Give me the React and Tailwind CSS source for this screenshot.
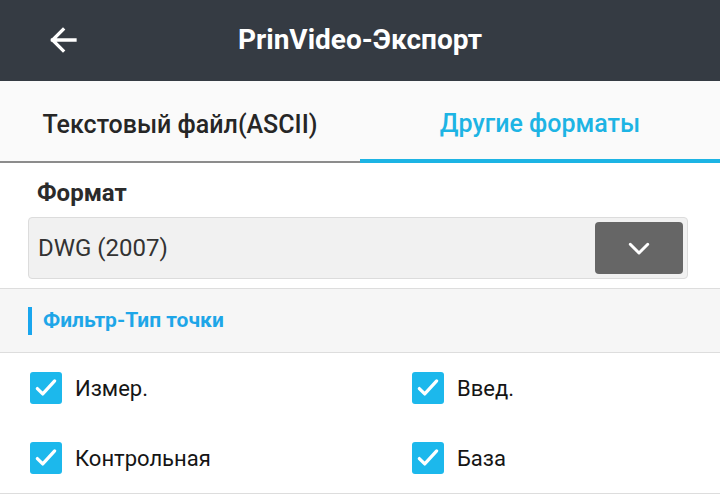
import { useState } from 'react';

function Check({ label, checked, onToggle }) {
  return (
    <button onClick={onToggle} className="flex items-center gap-[13px] h-[70px] text-left">
      <span className={`w-[32px] h-[32px] rounded-[3px] flex items-center justify-center ${checked ? 'bg-[#1cb8ec]' : 'border-2 border-gray-400'}`}>
        {checked && (
          <svg width="26" height="26" viewBox="0 0 24 24" fill="none" stroke="white" strokeWidth="3" strokeLinecap="round" strokeLinejoin="round">
            <path d="M4 12.5l5 5L20 5.5" />
          </svg>
        )}
      </span>
      <span className="text-[22px] text-[#151515]">{label}</span>
    </button>
  );
}

export default function App() {
  const [tab, setTab] = useState(1);
  const [checks, setChecks] = useState({ izm: true, vved: true, kontr: true, baza: true });
  const toggle = (k) => setChecks((p) => ({ ...p, [k]: !p[k] }));

  return (
    <div className="w-[720px] h-[498px] bg-white overflow-hidden" style={{ fontFamily: 'Roboto, "Noto Sans", sans-serif' }}>
      <div className="h-[81px] bg-[#353b43] flex items-center relative">
        <button className="absolute left-[45px] top-[22px] text-white">
          <svg width="36" height="36" viewBox="0 0 24 24" fill="none" stroke="white" strokeWidth="2.2" strokeLinecap="square">
            <path d="M20 12H5M12 5l-7 7 7 7" />
          </svg>
        </button>
        <div className="w-full text-center text-white text-[28px] font-bold pb-[2px]">PrinVideo-Экспорт</div>
      </div>

      <div className="h-[82px] bg-[#fafafa] flex">
        {['Текстовый файл(ASCII)', 'Другие форматы'].map((t, i) => (
          <button
            key={t}
            onClick={() => setTab(i)}
            className={`flex-1 flex items-center justify-center text-[25px] font-medium pt-[8px] ${
              tab === i ? 'text-[#1db4e4] border-b-4 border-[#1db4e4]' : 'text-[#262626] border-b-2 border-[#8c8c8c]'
            }`}
          >
            {t}
          </button>
        ))}
      </div>

      <div className="pl-[28px] pr-[32px] pt-[16px] pb-[9px]">
        <div className="text-[24px] leading-[28px] font-bold text-[#2b2b2b] pl-[9px] mb-[10px]">Формат</div>
        <div className="h-[62px] bg-[#f1f1f1] border border-[#dcdcdc] rounded-[4px] flex items-center justify-between pl-[9px] pr-[4px]">
          <span className="text-[24px] text-[#333]">DWG (2007)</span>
          <span className="w-[88px] h-[52px] bg-[#666666] rounded-[4px] flex items-center justify-center">
            <svg width="30" height="30" viewBox="0 0 24 24" fill="none" stroke="white" strokeWidth="2.4" strokeLinecap="round" strokeLinejoin="round">
              <path d="M5 9l7 7 7-7" />
            </svg>
          </span>
        </div>
      </div>

      <div className="h-[65px] bg-[#f6f6f6] border-y border-[#dddddd] flex items-center px-[28px]">
        <span className="w-[4px] h-[28px] bg-[#19a6ee] mr-[11px]" />
        <span className="text-[21px] font-bold text-[#1ea6e8]">Фильтр-Тип точки</span>
      </div>

      <div className="grid grid-cols-2 pl-[30px] border-b border-[#dddddd]">
        <Check label="Измер." checked={checks.izm} onToggle={() => toggle('izm')} />
        <div className="pl-[37px]"><Check label="Введ." checked={checks.vved} onToggle={() => toggle('vved')} /></div>
        <Check label="Контрольная" checked={checks.kontr} onToggle={() => toggle('kontr')} />
        <div className="pl-[37px]"><Check label="База" checked={checks.baza} onToggle={() => toggle('baza')} /></div>
      </div>
    </div>
  );
}
